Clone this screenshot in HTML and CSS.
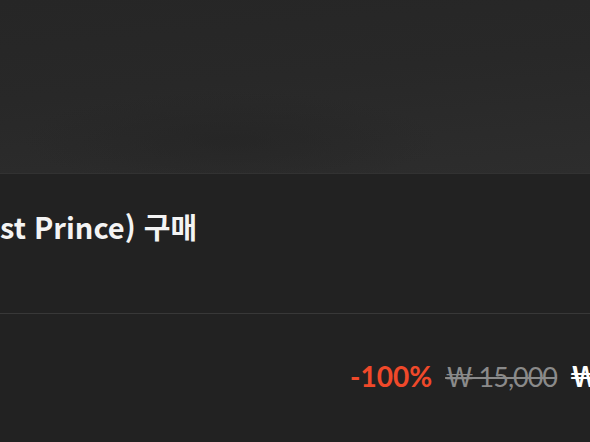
FILE: index.html
```html
<!DOCTYPE html>
<html lang="ko">
<head>
<meta charset="utf-8">
<link rel="stylesheet" href="styles.css">
</head>
<body>
<div class="page">
  <div class="hero"></div>
  <section class="purchase">
    <h1 class="title">st Prince) 구매</h1>
    <div class="divider"></div>
    <div class="price-row">
      <span class="discount">-100%</span>
      <span class="original">₩ 15,000</span>
      <span class="final">₩ 0</span>
    </div>
  </section>
</div>
</body>
</html>
```
FILE: styles.css
```css
html, body {
  margin: 0;
  padding: 0;
  background: #222222;
  overflow: hidden;
}
.page {
  width: 590px;
  height: 442px;
  overflow: hidden;
  font-family: "Noto Sans CJK KR", "Noto Sans", sans-serif;
}
.hero {
  height: 173px;
  background:
    radial-gradient(ellipse 300px 70px at 230px 140px, rgba(34,34,34,0.5), rgba(34,34,34,0) 70%),
    linear-gradient(175deg, #262626 0%, #282828 45%, #2d2d2d 100%);
  border-bottom: 1px solid #323232;
}
.purchase {
  background: #222222;
}
.title {
  margin: 0;
  padding: 32px 0 0 0;
  font-size: 29px;
  font-weight: 700;
  line-height: 40px;
  color: #f4f4f4;
  white-space: nowrap;
}
.divider {
  margin-top: 67px;
  height: 1px;
  background: #383838;
}
.price-row {
  display: flex;
  align-items: baseline;
  gap: 13px;
  padding: 45px 0 0 350px;
  white-space: nowrap;
  font-family: Lato, "Noto Sans", sans-serif;
  font-size: 28px;
  line-height: 34px;
}
.discount {
  color: #f0492a;
  font-weight: 700;
}
.original {
  color: #8a8a8a;
  font-size: 27px;
  letter-spacing: -1px;
  text-decoration: line-through;
  text-decoration-thickness: 2px;
}
.final {
  color: #ffffff;
  font-weight: 700;
}
```
